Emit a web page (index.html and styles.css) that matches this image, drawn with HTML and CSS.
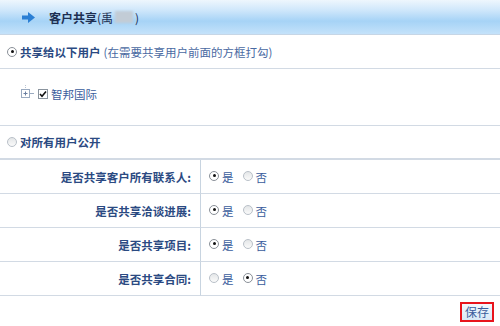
FILE: index.html
```html
<!DOCTYPE html>
<html>
<head>
<meta charset="utf-8">
<link rel="stylesheet" href="styles.css">
</head>
<body>
<div class="page">
  <div class="header">
    <svg class="arrow" width="13" height="11" viewBox="0 0 13 11"><path d="M0 3.5H6V0L13 5.5L6 11V7.5H0Z" fill="#2b7fd4"/></svg>
    <span class="title"><b>客户共享</b>(禹<span class="blur"></span>)</span>
  </div>
  <div class="row opt">
    <span class="radio on"></span>
    <b class="lbl">共享给以下用户</b><span class="hint">(在需要共享用户前面的方框打勾)</span>
  </div>
  <div class="tree">
    <svg class="tico" width="16" height="16" viewBox="0 0 16 16">
      <path d="M6.5 0V4" stroke="#b8c4d4" stroke-width="1" stroke-dasharray="1 1"/>
      <rect x="2.5" y="4.5" width="8" height="8" fill="#fff" stroke="#9aaac0"/>
      <path d="M4.5 8.5H8.5M6.5 6.5V10.5" stroke="#6a7ea0"/>
      <path d="M11 8.5H15" stroke="#9aaac0"/>
    </svg>
    <span class="cbox"><svg width="8" height="8" viewBox="0 0 8 8"><path d="M1 4L3 6.2L7 1.5" stroke="#111" stroke-width="1.6" fill="none"/></svg></span>
    <span class="tname">智邦国际</span>
  </div>
  <div class="row opt2">
    <span class="radio"></span>
    <b class="lbl">对所有用户公开</b>
  </div>
  <div class="grid">
    <div class="cell key">是否共享客户所有联系人:</div>
    <div class="cell val"><span class="radio on"></span><span class="t">是</span><span class="radio"></span><span class="t">否</span></div>
    <div class="cell key">是否共享洽谈进展:</div>
    <div class="cell val"><span class="radio on"></span><span class="t">是</span><span class="radio"></span><span class="t">否</span></div>
    <div class="cell key">是否共享项目:</div>
    <div class="cell val"><span class="radio on"></span><span class="t">是</span><span class="radio"></span><span class="t">否</span></div>
    <div class="cell key">是否共享合同:</div>
    <div class="cell val"><span class="radio"></span><span class="t">是</span><span class="radio on"></span><span class="t">否</span></div>
  </div>
  <div class="foot">
    <button class="save">保存</button>
  </div>
</div>
</body>
</html>
```

FILE: styles.css
```css
html, body { margin: 0; padding: 0; background: #fff; }
body { font-family: "Noto Sans CJK SC", "Noto Sans", sans-serif; font-size: 11.5px; color: #2f4f86; }
.page { width: 500px; }
.header {
  height: 34px;
  border-bottom: 1px solid #c6d6e6;
  background: linear-gradient(#eef6fd 0%, #cfe7fb 30%, #a6d3f6 62%, #c4e2fa 100%);
  display: flex; align-items: center;
}
.arrow { margin-left: 22px; margin-right: 14px; }
.title { color: #1d2f52; font-size: 12px; display: flex; align-items: center; }
.title b { font-weight: bold; }
.blur { display: inline-block; width: 18px; height: 12px; background: #c2ccd6; margin: 0 2px; filter: blur(1px); }
.row { display: flex; align-items: center; border-bottom: 1px solid #d2dae4; }
.opt { height: 33px; padding-left: 7px; }
.opt2 { height: 32px; padding-left: 7px; border-bottom: 2px solid #d2dae4; }
.lbl { font-weight: bold; color: #2b4a82; margin-left: 3px; }
.hint { color: #4a6aa2; margin-left: 3px; }
.radio {
  display: inline-block; width: 8px; height: 8px; border-radius: 50%;
  border: 1px solid #b9c0c8; background: linear-gradient(#e4e6e8, #fafafa);
  position: relative; box-sizing: content-box;
}
.radio.on { border-color: #8a9098; background: #fff; }
.radio.on::after {
  content: ""; position: absolute; left: 2.5px; top: 2.5px; width: 3px; height: 3px; border-radius: 50%; background: #111;
}
.tree { height: 57px; border-bottom: 1px solid #d2dae4; display: flex; align-items: center; padding-left: 19px; padding-bottom: 6px; box-sizing: border-box; }
.tico { margin-right: 3px; margin-top: -3px; }
.cbox { width: 8px; height: 8px; border: 1px solid #8a949e; background: #fff; display: inline-flex; align-items: center; justify-content: center; }
.tname { margin-left: 3px; color: #3a5c9c; font-size: 11.5px; }
.grid { display: grid; grid-template-columns: 201px 1fr; }
.cell { height: 33px; border-bottom: 1px solid #d2dae4; display: flex; align-items: center; }
.key { justify-content: flex-end; padding-right: 9px; font-weight: bold; color: #2b4a82; border-right: 1px solid #c8d4e0; }
.val { padding-left: 8px; }
.val .radio { margin-top: -2px; }
.val .t { margin-left: 3px; margin-right: 9px; color: #3a5c9c; }
.foot { display: flex; justify-content: flex-end; padding: 6px 6px 0 0; }
.save {
  font-family: inherit; font-size: 12px; color: #3a5c9c; padding: 0; height: 20px; line-height: 16px; white-space: nowrap;
  border: 2px solid #e8141c; background: linear-gradient(#f2f8fd, #d8e8f6); box-sizing: border-box; width: 34px;
}
```
